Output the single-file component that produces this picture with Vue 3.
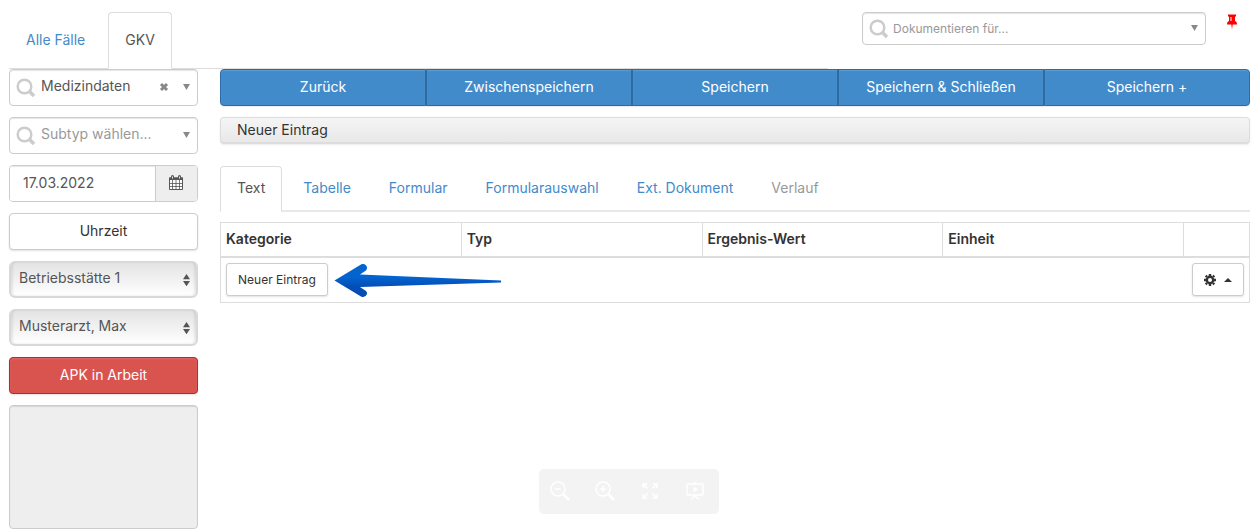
<script setup>
import { ref } from 'vue'

const caseTabs = ['Alle Fälle', 'GKV']
const actions = ['Zurück', 'Zwischenspeichern', 'Speichern', 'Speichern & Schließen', 'Speichern +']
const entryTabs = ['Text', 'Tabelle', 'Formular', 'Formularauswahl', 'Ext. Dokument', 'Verlauf']
const columns = ['Kategorie', 'Typ', 'Ergebnis-Wert', 'Einheit']

const activeCase = ref('GKV')
const activeEntry = ref('Text')
const documentFor = ref('')
const entryType = ref('Medizindaten')
const subtype = ref('')
const date = ref('17.03.2022')
const site = ref('Betriebsstätte 1')
const doctor = ref('Musterarzt, Max')
const note = ref('')
</script>

<template>
  <div class="page">
    <header class="top">
      <nav class="tabs case-tabs" aria-label="Fälle">
        <a
          v-for="tab in caseTabs"
          :key="tab"
          href="#"
          :class="{ active: tab === activeCase }"
          @click.prevent="activeCase = tab"
        >{{ tab }}</a>
      </nav>
      <div class="top-right">
        <div class="combo small">
          <svg class="lens" viewBox="0 0 20 20" aria-hidden="true">
            <circle cx="8.500" cy="8.500" r="6.800" />
            <path class="handle" d="M13.500 13.500L18 18" />
          </svg>
          <select v-model="documentFor" class="empty" aria-label="Dokumentieren für">
            <option value="">Dokumentieren für...</option>
          </select>
          <svg class="caret" viewBox="0 0 8 7" aria-hidden="true"><path d="M0 0H8L4 7Z" /></svg>
        </div>
        <button class="pin" type="button" aria-label="Anheften">
          <svg viewBox="0 0 12 16" aria-hidden="true">
            <path d="M2 0.500H10V2.500H9V7C10.500 7.500 11 8.500 11 10.500H6.700L6 15.500L5.300 10.500H1C1 8.500 1.500 7.500 3 7V2.500H2Z" fill="#f00" />
            <path d="M5 3V7" stroke="#fff" stroke-width="1" />
          </svg>
        </button>
      </div>
    </header>

    <div class="body">
      <aside class="side">
        <div class="combo">
          <svg class="lens" viewBox="0 0 20 20" aria-hidden="true">
            <circle cx="8.500" cy="8.500" r="6.800" />
            <path class="handle" d="M13.500 13.500L18 18" />
          </svg>
          <select v-model="entryType" aria-label="Typ">
            <option>Medizindaten</option>
          </select>
          <button class="clear" type="button" aria-label="Auswahl entfernen">
            <svg viewBox="0 0 10 10" aria-hidden="true"><path d="M2 2L8 8M8 2L2 8" /></svg>
          </button>
          <svg class="caret" viewBox="0 0 8 7" aria-hidden="true"><path d="M0 0H8L4 7Z" /></svg>
        </div>

        <div class="combo">
          <svg class="lens" viewBox="0 0 20 20" aria-hidden="true">
            <circle cx="8.500" cy="8.500" r="6.800" />
            <path class="handle" d="M13.500 13.500L18 18" />
          </svg>
          <select v-model="subtype" class="empty" aria-label="Subtyp">
            <option value="">Subtyp wählen...</option>
          </select>
          <svg class="caret" viewBox="0 0 8 7" aria-hidden="true"><path d="M0 0H8L4 7Z" /></svg>
        </div>

        <div class="date">
          <input v-model="date" type="text" aria-label="Datum" />
          <button type="button" aria-label="Kalender öffnen">
            <svg viewBox="0 0 16 16" aria-hidden="true">
              <path d="M1.500 3H14.500V14.500H1.500Z" fill="#fff" stroke="#555" />
              <path d="M1 2.500H15V5H1Z" fill="#555" />
              <path d="M4.500 5V14.500M8 5V14.500M11.500 5V14.500M1.500 8.500H14.500M1.500 11.500H14.500" stroke="#555" stroke-width="0.800" />
              <path d="M4.500 1.500V3.500M11.500 1.500V3.500" stroke="#555" stroke-width="3" stroke-linecap="round" />
              <path d="M4.500 1.500V3.500M11.500 1.500V3.500" stroke="#eee" />
            </svg>
          </button>
        </div>

        <button class="plain" type="button">Uhrzeit</button>

        <div class="picker">
          <select v-model="site" aria-label="Betriebsstätte"><option>Betriebsstätte 1</option></select>
          <svg viewBox="0 0 8 14" aria-hidden="true"><path d="M4 0L8 6H0ZM0 8H8L4 14Z" /></svg>
        </div>
        <div class="picker">
          <select v-model="doctor" aria-label="Arzt"><option>Musterarzt, Max</option></select>
          <svg viewBox="0 0 8 14" aria-hidden="true"><path d="M4 0L8 6H0ZM0 8H8L4 14Z" /></svg>
        </div>

        <button class="danger" type="button">APK in Arbeit</button>
        <textarea v-model="note" readonly aria-label="Notiz"></textarea>
      </aside>

      <main class="main">
        <div class="actions">
          <button v-for="action in actions" :key="action" type="button">{{ action }}</button>
        </div>

        <div class="heading">Neuer Eintrag</div>

        <nav class="tabs entry-tabs" aria-label="Eintrag">
          <a
            v-for="tab in entryTabs"
            :key="tab"
            href="#"
            :class="{ active: tab === activeEntry, off: tab === 'Verlauf' }"
            @click.prevent="activeEntry = tab"
          >{{ tab }}</a>
        </nav>

        <table>
          <colgroup>
            <col v-for="column in columns" :key="column" />
            <col class="tools-col" />
          </colgroup>
          <thead>
            <tr>
              <th v-for="column in columns" :key="column" scope="col">{{ column }}</th>
              <th></th>
            </tr>
          </thead>
          <tbody>
            <tr>
              <td colspan="4">
                <div class="cell">
                  <button class="tiny" type="button">Neuer Eintrag</button>
                  <svg class="arrow" viewBox="0 0 168 34" aria-hidden="true">
                    <defs>
                      <linearGradient id="arrow-fill" x1="0" y1="0" x2="0" y2="1">
                        <stop offset="0.400" stop-color="#0464cf" />
                        <stop offset="0.700" stop-color="#044cb6" />
                      </linearGradient>
                    </defs>
                    <path
                      d="M0.500 17.500L27 1.500C31 -0.500 35 4 32 7.500L26 11.500L167 17.500V19.500L26 24L32 28C35 31 31 35.500 27 33.500Z"
                      fill="url(#arrow-fill)"
                    />
                  </svg>
                </div>
              </td>
              <td>
                <div class="cell end">
                  <button class="tiny gear" type="button" aria-label="Einstellungen">
                    <svg class="cog" viewBox="0 0 12 12" aria-hidden="true">
                      <circle cx="6" cy="6" r="3.200" fill="none" stroke="#333" stroke-width="2.400" />
                      <path
                        d="M6 0V2M6 10V12M0 6H2M10 6H12M1.700 1.700L3 3M9 9L10.300 10.300M10.300 1.700L9 3M3 9L1.700 10.300"
                        stroke="#333"
                        stroke-width="2.400"
                      />
                    </svg>
                    <svg class="up" viewBox="0 0 8 4" aria-hidden="true"><path d="M0 4L4 0L8 4Z" fill="#333" /></svg>
                  </button>
                </div>
              </td>
            </tr>
          </tbody>
        </table>
      </main>
    </div>

    <div class="viewer">
      <div class="viewer-bar">
        <button type="button" aria-label="Verkleinern">
          <svg viewBox="0 0 20 20"><circle cx="8" cy="8" r="7" /><path d="M5 8H11" /><path class="thick" d="M13.500 13.500L19 19" /></svg>
        </button>
        <button type="button" aria-label="Vergrößern">
          <svg viewBox="0 0 20 20"><circle cx="8" cy="8" r="7" /><path d="M5 8H11M8 5V11" /><path class="thick" d="M13.500 13.500L19 19" /></svg>
        </button>
        <button type="button" aria-label="Vollbild">
          <svg viewBox="0 0 20 20"><path d="M3 7V3H7M3 3L7.500 7.500M13 3H17V7M17 3L12.500 7.500M3 13V17H7M3 17L7.500 12.500M13 17H17V13M17 17L12.500 12.500" /></svg>
        </button>
        <button type="button" aria-label="Präsentation">
          <svg viewBox="0 0 20 20"><rect x="2" y="3" width="16" height="11" rx="1" /><path d="M10 1V3M10 14V15M10 15L6 18.500M10 15L14 18.500" /><path class="play" d="M8.500 5.500L13 8.500L8.500 11.500Z" /></svg>
        </button>
      </div>
    </div>
  </div>
</template>

<style>
body {
  background: #fff;
}
</style>

<style scoped>
.page {
  padding: 0 4px 0 9px;
  color: #333;
  font-family: Inter, "Liberation Sans", sans-serif;
  font-size: 14px;
  line-height: 20px;
}
.page *,
.page *::before {
  box-sizing: border-box;
}
button,
select,
input,
textarea {
  margin: 0;
  color: inherit;
  font: inherit;
}
svg {
  display: block;
  fill: none;
}
.top {
  display: flex;
  height: 69px;
}
.tabs {
  display: flex;
  align-items: flex-end;
  border-bottom: 1px solid #ddd;
}
.tabs a {
  margin-bottom: -1px;
  padding: 0 16px 2px;
  border: 1px solid transparent;
  border-radius: 4px 4px 0 0;
  color: #428bca;
  text-decoration: none;
}
.tabs a.active {
  border-color: #ddd;
  border-bottom-color: #fff;
  background: #fff;
  color: #555;
}
.tabs a.off {
  color: #999;
}
.case-tabs {
  flex: 0 0 66%;
  gap: 6px;
}
.case-tabs a {
  line-height: 53px;
}
.top-right {
  display: flex;
  flex: 1;
  align-items: flex-start;
  padding: 12px 12px 0 34px;
}
.combo {
  position: relative;
  display: flex;
  align-items: center;
  height: 37px;
  border: 1px solid #ccc;
  border-radius: 4px;
  background: #fff;
  box-shadow: inset 0 1px 1px rgba(0, 0, 0, 0.1);
  color: #555;
}
.combo select {
  width: 100%;
  height: 100%;
  padding: 0 32px 3px 31px;
  border: 0;
  background: transparent;
  appearance: none;
}
.combo select.empty {
  color: #999;
}
.combo.small {
  flex: 1;
  height: 33px;
  font-size: 12px;
}
.combo.small select {
  padding: 0 30px;
}
.lens {
  position: absolute;
  left: 6px;
  width: 20px;
  height: 20px;
  stroke: #ccc;
  stroke-width: 2.500;
  pointer-events: none;
}
.lens .handle {
  stroke-width: 3.500;
}
.caret {
  position: absolute;
  right: 7px;
  width: 7px;
  height: 6px;
  margin-bottom: 2px;
  fill: #888;
  pointer-events: none;
}
.clear {
  position: absolute;
  right: 28px;
  padding: 0 0 2px;
  border: 0;
  background: none;
}
.clear svg {
  width: 10px;
  height: 10px;
  stroke: #888;
  stroke-width: 3;
}
.pin {
  margin: 2px 0 0 20px;
  padding: 0;
  border: 0;
  background: none;
}
.pin svg {
  width: 12px;
  height: 16px;
}
.body {
  display: grid;
  grid-template-columns: 189px minmax(0, 1fr);
  gap: 22px;
}
.side {
  display: flex;
  flex-direction: column;
  gap: 11px;
}
.date {
  display: flex;
  height: 37px;
  border: 1px solid #ccc;
  border-radius: 4px;
  overflow: hidden;
  color: #555;
}
.date input {
  flex: 1;
  min-width: 0;
  padding: 0 13px 2px;
  border: 0;
  box-shadow: inset 0 1px 1px rgba(0, 0, 0, 0.1);
}
.date button {
  width: 42px;
  padding: 0 12px 2px;
  border: 0;
  border-left: 1px solid #ccc;
  background: #eee;
}
.date svg {
  width: 16px;
  height: 16px;
}
.plain,
.danger {
  height: 37px;
  padding: 0 12px 2px;
  border: 1px solid #ccc;
  border-radius: 4px;
  background: #fff;
  box-shadow: 0 1px 2px rgba(0, 0, 0, 0.12);
}
.danger {
  border-color: #b52b27;
  background: #d9534f;
  box-shadow: inset 0 1px 2px rgba(255, 255, 255, 0.15), 0 1px 2px rgba(0, 0, 0, 0.12);
  color: #fff;
}
.picker {
  position: relative;
  display: flex;
  align-items: center;
  height: 37px;
  color: #555;
}
.picker select {
  width: 100%;
  height: 100%;
  padding: 0 24px 2px 8px;
  border: 2px solid #d8d8d8;
  border-width: 1px 2px 2px;
  border-radius: 6px;
  background: linear-gradient(#e3e3e3, #fff);
  box-shadow: inset 2px 0 2px rgba(0, 0, 0, 0.08), inset -2px 0 2px rgba(0, 0, 0, 0.08);
  appearance: none;
}
.picker svg {
  position: absolute;
  right: 8px;
  width: 7px;
  height: 14px;
  fill: #555;
  pointer-events: none;
}
textarea {
  display: block;
  height: 124px;
  border: 1px solid #ccc;
  border-radius: 4px;
  background: #eee;
  box-shadow: inset 0 1px 1px rgba(0, 0, 0, 0.1);
  resize: none;
}
.actions {
  display: grid;
  grid-template-columns: repeat(5, 1fr);
}
.actions button {
  height: 37px;
  padding: 0 8px 1px;
  border: 1px solid #2d6ca2;
  background: #428bca;
  box-shadow: inset 0 1px 1px rgba(255, 255, 255, 0.15), 0 1px 1px rgba(0, 0, 0, 0.08);
  color: #fff;
  white-space: nowrap;
}
.actions button:first-child {
  border-radius: 4px 0 0 4px;
}
.actions button:last-child {
  border-radius: 0 4px 4px 0;
}
.heading {
  height: 27px;
  margin-top: 11px;
  padding: 0 16px;
  border: 1px solid #ddd;
  border-bottom-width: 2px;
  border-radius: 4px;
  background: linear-gradient(#f5f5f5, #e8e8e8);
  box-shadow: 0 1px 2px rgba(0, 0, 0, 0.08);
  line-height: 23px;
}
.entry-tabs {
  margin-top: 22px;
  border-bottom: 2px solid #e8e8e8;
  gap: 4px;
}
.entry-tabs a {
  margin-bottom: -2px;
  line-height: 42px;
}
table {
  width: 100%;
  margin-top: 10px;
  border: 1px solid #ddd;
  border-collapse: collapse;
  table-layout: fixed;
}
.tools-col {
  width: 66px;
}
th {
  height: 34px;
  padding: 0 5px;
  border: 1px solid #ddd;
  border-bottom-width: 2px;
  font-weight: 600;
  text-align: left;
}
td {
  height: 45px;
  padding: 5px;
}
.cell {
  display: flex;
  align-items: center;
  gap: 6px;
}
.end {
  justify-content: flex-end;
}
.tiny {
  height: 33px;
  padding: 0 11px;
  border: 1px solid #ccc;
  border-radius: 3px;
  background: #fff;
  box-shadow: 0 1px 2px rgba(0, 0, 0, 0.12);
  font-size: 12px;
}
.arrow {
  width: 168px;
  height: 34px;
}
.gear {
  display: flex;
  align-items: center;
  gap: 8px;
}
.cog {
  width: 12px;
  height: 12px;
}
.up {
  width: 8px;
  height: 4px;
}
.viewer {
  position: fixed;
  right: 6px;
  bottom: 16px;
  left: 9px;
  display: flex;
  justify-content: center;
  pointer-events: none;
}
.viewer-bar {
  display: flex;
  border-radius: 5px;
  background: #f3f3f3;
  pointer-events: auto;
}
.viewer-bar button {
  display: flex;
  align-items: center;
  justify-content: center;
  width: 45px;
  height: 45px;
  padding: 0 2px 2px 0;
  border: 0;
  background: none;
}
.viewer-bar svg {
  width: 20px;
  height: 20px;
  stroke: #fff;
  stroke-width: 1.500;
}
.viewer-bar .thick {
  stroke-width: 2.500;
}
.viewer-bar .play {
  fill: #fff;
  stroke: none;
}
</style>
